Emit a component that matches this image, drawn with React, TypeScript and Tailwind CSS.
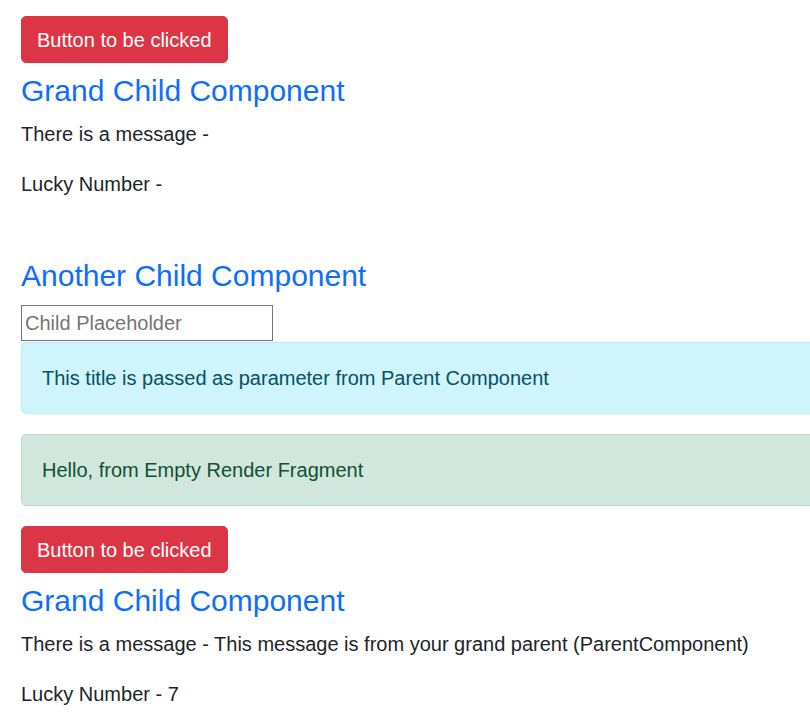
function GrandChild({ message, lucky }: { message: string; lucky: string }) {
  return (
    <div className="flex flex-col">
      <button
        type="button"
        className="self-start h-[47px] px-[15px] rounded-[5px] border border-[#dc3545] bg-[#dc3545] text-white text-[20px] leading-[30px]"
      >
        Button to be clicked
      </button>
      <h3 className="mt-[9px] mb-[10px] text-[30px] leading-[37px] font-normal text-[#0d6efd]">
        Grand Child Component
      </h3>
      <p className="mb-[20px]">There is a message - {message}</p>
      <p className="mb-[20px]">Lucky Number - {lucky}</p>
    </div>
  )
}

export default function App() {
  return (
    <div className="w-[810px] h-[716px] overflow-hidden bg-white font-['Liberation_Sans',Arial,sans-serif] text-[20px] leading-[30px] text-[#212529]">
      <div className="flex flex-col pl-[21px] pt-[16px]">
        <GrandChild message="" lucky="" />

        <h3 className="mt-[38px] mb-[11px] text-[30px] leading-[37px] font-normal text-[#0d6efd]">
          Another Child Component
        </h3>
        <input
          type="text"
          placeholder="Child Placeholder"
          className="w-[252px] h-[36px] pl-[3px] border border-[#767676] text-[20px] placeholder:text-[#757575] outline-none"
        />
        <div className="mt-[1px] mb-[20px] -mr-[30px] px-[20px] py-[20px] rounded-[5px] border border-[#b6effb] bg-[#cff4fc] text-[#055160]">
          This title is passed as parameter from Parent Component
        </div>
        <div className="mb-[20px] -mr-[30px] px-[20px] py-[20px] rounded-[5px] border border-[#badbcc] bg-[#d1e7dd] text-[#0f5132]">
          Hello, from Empty Render Fragment
        </div>

        <GrandChild
          message="This message is from your grand parent (ParentComponent)"
          lucky="7"
        />
      </div>
    </div>
  )
}
